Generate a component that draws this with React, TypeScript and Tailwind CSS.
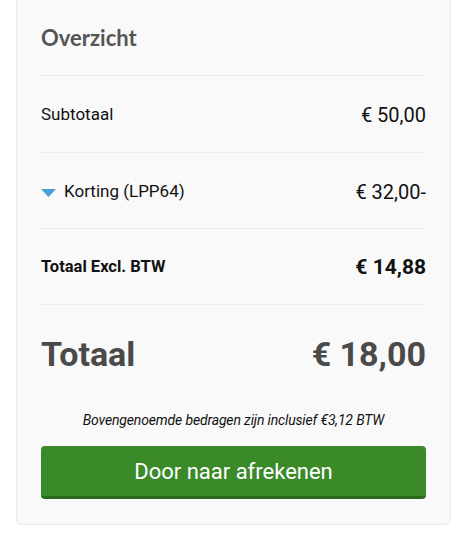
import React from "react";

function Row({
  label,
  value,
  bold,
  toggle,
  tall,
}: {
  label: string;
  value: string;
  bold?: boolean;
  toggle?: boolean;
  tall?: boolean;
}) {
  return (
    <div
      className={`flex items-center justify-between border-t border-[#ebebeb] pt-0.5 ${
        tall ? "h-[77px]" : "h-[76px]"
      }`}
    >
      <div className="flex items-center gap-2">
        {toggle && (
          <svg width="15" height="8" viewBox="0 0 15 8" className="mt-0.5">
            <path d="M0 0 H15 L7.5 8 Z" fill="#4b9fd6" />
          </svg>
        )}
        <span className={bold ? "text-[16.5px] font-bold text-[#111]" : "text-[17px] text-[#111]"}>
          {label}
        </span>
      </div>
      <span className={bold ? "text-[21px] font-bold text-[#111]" : "text-[20px] text-[#111]"}>
        {value}
      </span>
    </div>
  );
}

export default function App() {
  return (
    <div className="min-h-[540px] bg-white font-['Roboto',sans-serif]">
      <div className="ml-4 w-[435px] rounded-b-md border-x border-b border-[#ececec] bg-[#f9f9f9] px-6 pb-[25px]">
        <div className="flex h-[75px] items-center">
          <h2 className="font-['Lato',sans-serif] text-[22px] font-bold text-[#555]">Overzicht</h2>
        </div>
        <Row label="Subtotaal" value="€ 50,00" tall />
        <Row label="Korting (LPP64)" value="€ 32,00-" toggle />
        <Row label="Totaal Excl. BTW" value="€ 14,88" bold />
        <div className="flex h-[100px] items-center justify-between border-t border-[#ebebeb] text-[#4a4a4a]">
          <span className="text-[34px] font-bold">Totaal</span>
          <span className="text-[34px] font-bold">€ 18,00</span>
        </div>
        <p className="pt-1.5 text-center text-[14px] italic tracking-[-0.15px] text-[#111]">
          Bovengenoemde bedragen zijn inclusief €3,12 BTW
        </p>
        <button className="mt-[15px] h-[53px] w-full rounded-sm border-b-[3px] border-[#2b6a1e] bg-[#3b8a29] text-[22px] text-white">
          Door naar afrekenen
        </button>
      </div>
    </div>
  );
}
